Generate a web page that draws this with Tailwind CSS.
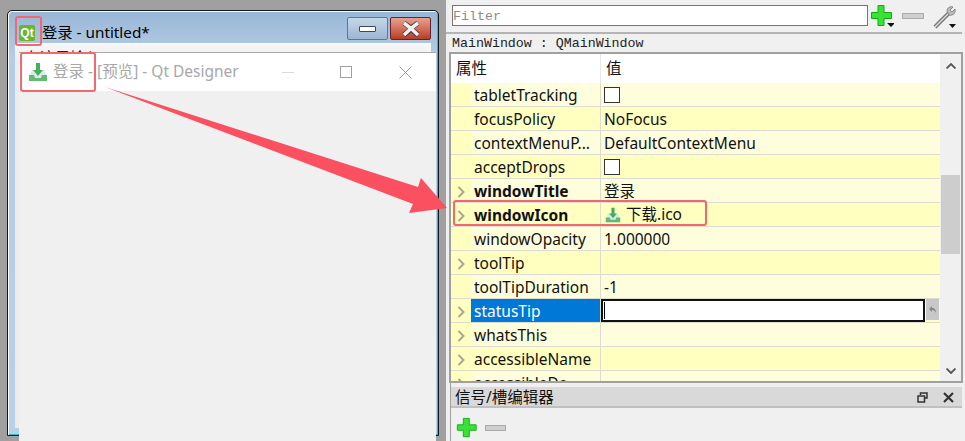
<!DOCTYPE html>
<html lang="zh-CN">
<head>
  <meta charset="UTF-8" />
  <title>Qt Designer</title>
  <script src="https://cdn.jsdelivr.net/npm/@tailwindcss/browser@4"></script>
</head>
<body class="w-[965px] h-[441px] overflow-hidden bg-[#a0a0a0] relative font-['Noto_Sans','Noto_Sans_CJK_SC',sans-serif] text-[15.5px] text-[#111]">

  <!-- Main window behind the preview -->
  <div class="absolute left-[7px] top-[10px] w-[432px] h-[426px] rounded-t-[5px] border border-[#101820] shadow-[inset_1px_1px_0_#fff,inset_-1px_-1px_0_#22b8d8] bg-gradient-to-b from-[#98b6d6] via-[#b4cce4] via-10% to-[#b8d0e8] flex flex-col">
    <div class="flex items-center h-[32px] shrink-0 pl-[11px] pt-[11px]">
      <div class="w-[16px] h-[16px] bg-[#6db52c] rounded-[2px] flex items-center justify-center text-white text-[12px] font-bold font-['Liberation_Sans',sans-serif]">Qt</div>
      <span class="ml-[7px] text-[15.3px] text-black">登录 - untitled*</span>
      <div class="ml-auto self-start flex gap-[2px] mr-[7px] mt-[-5px]">
        <div class="w-[41px] h-[23px] rounded-[2px] border border-[#5f7690] bg-gradient-to-b from-[#c5d8ea] to-[#9bb6d2] flex items-center justify-center">
          <div class="w-[17px] h-[6px] bg-white border border-[#445] rounded-[1px]"></div>
        </div>
        <div class="w-[41px] h-[23px] rounded-[2px] border border-[#6b2030] bg-gradient-to-b from-[#e8a090] to-[#b83c22] flex items-center justify-center">
          <svg class="w-[20px] h-[16px]" viewBox="0 0 20 16"><path d="M3 2l7 5 7-5M3 14l7-6 7 6" stroke="#334" stroke-width="5" fill="none"/><path d="M3 2l7 5.500 7-5.500M3 14l7-6.500 7 6.500" stroke="#f0f0f0" stroke-width="3.500" fill="none"/></svg>
        </div>
      </div>
    </div>
    <div class="ml-[7px] mr-[7px] h-[385px] bg-gradient-to-b from-[#f8f8f8] to-[#ececec] to-5% pl-[10px] leading-[28px] text-[15px] text-[#222]">在这里输入</div>
  </div>

  <!-- Preview window -->
  <div class="absolute left-[19px] top-[52px] w-[417px] h-[400px] bg-[#f0f0f0] border-t border-[#a8a8a8]">
    <div class="flex items-center h-[38px] bg-white pl-[9px] text-[#a8a8a8]">
      <svg class="w-[20px] h-[20px]" viewBox="0 0 20 20">
        <path d="M1 14l3-6h12l3 6v5H1z" fill="#dfe6f0"/>
        <path d="M1 13h5l1 3h6l1-3h5v6H1z" fill="#62bb70"/>
        <path d="M8 1h4v7h3l-5 6-5-6h3z" fill="#43b05c"/>
      </svg>
      <span class="ml-[5px] whitespace-nowrap">登录 - [预览] - Qt Designer</span>
      <div class="ml-auto flex items-center">
        <div class="w-[12px] h-px bg-[#d8d8d8]"></div>
        <div class="w-[12px] h-[12px] border border-[#a0a0a0] ml-[46px]"></div>
        <svg class="w-[13px] h-[13px] ml-[47px] mr-[24px]" viewBox="0 0 13 13"><path d="M.5.5l12 12M12.500.5l-12 12" stroke="#999" fill="none"/></svg>
      </div>
    </div>
  </div>

  <!-- Property editor panel -->
  <div class="absolute left-[446px] top-0 w-[519px] h-[441px] bg-[#f0f0f0] flex flex-col">
    <div class="flex items-start h-[34px] shrink-0 pl-[6px] pt-[4px] border-b-2 border-[#b4b4b4] w-[516px]">
      <div class="w-[416px] h-[21px] mt-[1px] bg-white border border-[#767676] font-['Liberation_Mono',monospace] text-[13.3px] leading-[21px] text-[#8c8c8c]">Filter</div>
      <svg class="w-[24px] h-[24px] ml-[2px]" viewBox="0 0 24 24">
        <path d="M8 1.500h6v7h7.500v6H14v7H8v-7H1.500v-6H8z" fill="#3ce03c" stroke="#08b008"/>
        <path d="M17 19h8l-4 4z" fill="#111"/>
      </svg>
      <div class="w-[22px] h-[6px] ml-[8px] mt-[9px] bg-[#cfcfcf] border border-[#aaa]"></div>
      <svg class="w-[26px] h-[26px] ml-[8px]" viewBox="0 0 26 26">
        <path d="M3 23L17 9" stroke="#777" stroke-width="4"/>
        <path d="M3 23L17 9" stroke="#ddd" stroke-width="1.500"/>
        <path d="M15 7c0-3 3-5 6-4l-3 3 2 2 3-3c1 4-2 7-6 6z" fill="#bbb" stroke="#888"/>
        <path d="M19 22h7l-3.500 4z" fill="#111" transform="translate(-2,-2)"/>
      </svg>
    </div>
    <div class="h-[18px] shrink-0 pl-[6px] w-[516px] font-['Liberation_Mono',monospace] text-[13.3px] leading-[20px] text-[#222]">MainWindow : QMainWindow</div>

    <!-- Property tree -->
    <div class="ml-[3px] w-[514px] h-[331px] shrink-0 border-2 border-[#a0a0a0] flex overflow-hidden bg-white">
      <div class="w-[489px] shrink-0 flex flex-col">
        <div class="grid grid-cols-[150px_1fr] h-[29px] shrink-0 items-center">
          <span class="pl-[5px] border-r border-[#e8e8e8] leading-[29px]">属性</span>
          <span class="pl-[5px]">值</span>
        </div>
        <div class="grid grid-cols-[20px_130px_1fr] grid-rows-[23px] h-[24px] shrink-0 bg-[#fefedc] border-b border-[#dcdcd0] leading-[25px]">
          <span class="bg-[#ffffbf]"></span><span class="pl-[3px] border-r border-[#dcdcd0]">tabletTracking</span>
          <span class="pl-[3px] pt-[4px]"><span class="block w-[16px] h-[16px] bg-white border border-[#333]"></span></span>
        </div>
        <div class="grid grid-cols-[20px_130px_1fr] grid-rows-[23px] h-[24px] shrink-0 bg-[#ffffbf] border-b border-[#dcdcd0] leading-[25px]">
          <span></span><span class="pl-[3px] border-r border-[#dcdcd0]">focusPolicy</span><span class="pl-[3px]">NoFocus</span>
        </div>
        <div class="grid grid-cols-[20px_130px_1fr] grid-rows-[23px] h-[24px] shrink-0 bg-[#fefedc] border-b border-[#dcdcd0] leading-[25px]">
          <span class="bg-[#ffffbf]"></span><span class="pl-[3px] border-r border-[#dcdcd0]">contextMenuP...</span><span class="pl-[3px]">DefaultContextMenu</span>
        </div>
        <div class="grid grid-cols-[20px_130px_1fr] grid-rows-[23px] h-[24px] shrink-0 bg-[#ffffbf] border-b border-[#dcdcd0] leading-[25px]">
          <span></span><span class="pl-[3px] border-r border-[#dcdcd0]">acceptDrops</span>
          <span class="pl-[3px] pt-[4px]"><span class="block w-[16px] h-[16px] bg-white border border-[#333]"></span></span>
        </div>
        <div class="grid grid-cols-[20px_130px_1fr] grid-rows-[23px] h-[24px] shrink-0 bg-[#fefedc] border-b border-[#dcdcd0] leading-[25px]">
          <span class="bg-[#ffffbf] pt-[2px] flex items-center justify-center"><svg class="w-[8px] h-[12px]" viewBox="0 0 8 12"><path d="M1.500 1l5 5-5 5" stroke="#a8a890" stroke-width="2" fill="none"/></svg></span>
          <span class="pl-[3px] border-r border-[#dcdcd0] font-bold">windowTitle</span><span class="pl-[3px]">登录</span>
        </div>
        <div class="grid grid-cols-[20px_130px_1fr] grid-rows-[23px] h-[24px] shrink-0 bg-[#ffffbf] border-b border-[#dcdcd0] leading-[25px]">
          <span class="pt-[2px] flex items-center justify-center"><svg class="w-[8px] h-[12px]" viewBox="0 0 8 12"><path d="M1.500 1l5 5-5 5" stroke="#a8a890" stroke-width="2" fill="none"/></svg></span>
          <span class="pl-[3px] border-r border-[#dcdcd0] font-bold">windowIcon</span>
          <span class="pl-[4px] flex items-center">
            <svg class="w-[16px] h-[16px]" viewBox="0 0 20 20">
              <path d="M1 14l3-6h12l3 6v5H1z" fill="#dfe6f0"/>
              <path d="M1 13h5l1 3h6l1-3h5v6H1z" fill="#62bb70"/>
              <path d="M8 1h4v7h3l-5 6-5-6h3z" fill="#43b05c"/>
            </svg>
            <span class="ml-[5px]">下载.ico</span>
          </span>
        </div>
        <div class="grid grid-cols-[20px_130px_1fr] grid-rows-[23px] h-[24px] shrink-0 bg-[#fefedc] border-b border-[#dcdcd0] leading-[25px]">
          <span class="bg-[#ffffbf]"></span><span class="pl-[3px] border-r border-[#dcdcd0]">windowOpacity</span><span class="pl-[3px]">1.000000</span>
        </div>
        <div class="grid grid-cols-[20px_130px_1fr] grid-rows-[23px] h-[24px] shrink-0 bg-[#ffffbf] border-b border-[#dcdcd0] leading-[25px]">
          <span class="pt-[2px] flex items-center justify-center"><svg class="w-[8px] h-[12px]" viewBox="0 0 8 12"><path d="M1.500 1l5 5-5 5" stroke="#a8a890" stroke-width="2" fill="none"/></svg></span>
          <span class="pl-[3px] border-r border-[#dcdcd0]">toolTip</span><span></span>
        </div>
        <div class="grid grid-cols-[20px_130px_1fr] grid-rows-[23px] h-[24px] shrink-0 bg-[#fefedc] border-b border-[#dcdcd0] leading-[25px]">
          <span class="bg-[#ffffbf]"></span><span class="pl-[3px] border-r border-[#dcdcd0]">toolTipDuration</span><span class="pl-[3px]">-1</span>
        </div>
        <div class="grid grid-cols-[20px_130px_1fr] grid-rows-[23px] h-[24px] shrink-0 bg-[#ffffbf] border-b border-[#dcdcd0] leading-[25px]">
          <span class="pt-[2px] flex items-center justify-center"><svg class="w-[8px] h-[12px]" viewBox="0 0 8 12"><path d="M1.500 1l5 5-5 5" stroke="#a8a890" stroke-width="2" fill="none"/></svg></span>
          <span class="pl-[3px] bg-[#0078d7] text-white border-r border-[#dcdcd0]">statusTip</span>
          <span class="flex">
            <span class="w-[324px] h-[23px] bg-white border-2 border-[#111] flex items-center pl-[1px]"><span class="w-px h-[17px] bg-black"></span></span>
            <span class="w-[13px] h-[21px] ml-[1px] bg-[#c8c8c8] flex items-center justify-center"><svg class="w-[9px] h-[9px]" viewBox="0 0 9 9"><path d="M4 1L1 4l3 3V5c2 0 3 1 4 3 0-3-1-5-4-5z" fill="#888"/></svg></span>
          </span>
        </div>
        <div class="grid grid-cols-[20px_130px_1fr] grid-rows-[23px] h-[24px] shrink-0 bg-[#fefedc] border-b border-[#dcdcd0] leading-[25px]">
          <span class="bg-[#ffffbf] pt-[2px] flex items-center justify-center"><svg class="w-[8px] h-[12px]" viewBox="0 0 8 12"><path d="M1.500 1l5 5-5 5" stroke="#a8a890" stroke-width="2" fill="none"/></svg></span>
          <span class="pl-[3px] border-r border-[#dcdcd0]">whatsThis</span><span></span>
        </div>
        <div class="grid grid-cols-[20px_130px_1fr] grid-rows-[23px] h-[24px] shrink-0 bg-[#ffffbf] border-b border-[#dcdcd0] leading-[25px]">
          <span class="pt-[2px] flex items-center justify-center"><svg class="w-[8px] h-[12px]" viewBox="0 0 8 12"><path d="M1.500 1l5 5-5 5" stroke="#a8a890" stroke-width="2" fill="none"/></svg></span>
          <span class="pl-[3px] border-r border-[#dcdcd0]">accessibleName</span><span></span>
        </div>
        <div class="grid grid-cols-[20px_130px_1fr] grid-rows-[23px] h-[24px] shrink-0 bg-[#fefedc] leading-[25px]">
          <span class="bg-[#ffffbf] pt-[2px] flex items-center justify-center"><svg class="w-[8px] h-[12px]" viewBox="0 0 8 12"><path d="M1.500 1l5 5-5 5" stroke="#a8a890" stroke-width="2" fill="none"/></svg></span>
          <span class="pl-[3px] border-r border-[#dcdcd0]">accessibleDe...</span><span></span>
        </div>
      </div>
      <!-- Scrollbar -->
      <div class="flex-1 bg-[#f0f0f0] flex flex-col items-center relative">
        <svg class="w-[10px] h-[6px] mt-[9px]" viewBox="0 0 10 6"><path d="M.5 5.500L5 1l4.500 4.500" stroke="#555" stroke-width="1.800" fill="none"/></svg>
        <div class="w-[19px] h-[79px] bg-[#cdcdcd] mt-[106px]"></div>
        <svg class="w-[10px] h-[6px] mt-auto mb-[7px]" viewBox="0 0 10 6"><path d="M.5.5L5 5 9.500.5" stroke="#555" stroke-width="1.800" fill="none"/></svg>
      </div>
    </div>

    <!-- Signal/slot editor dock -->
    <div class="flex-1 ml-[4px] w-[512px] border-l border-[#a0a0a0]">
      <div class="mt-[4px] h-[21px] pt-[2px] bg-[#d9d9d9] border-b-2 border-[#c0c0c0] flex items-center pl-[4px] leading-none">
        <span>信号/槽编辑器</span>
        <svg class="w-[11px] h-[11px] ml-auto" viewBox="0 0 11 11"><path d="M3.500 3V1h6.500v5H8M1 4h6.500v6H1z" stroke="#333" stroke-width="1.500" fill="none"/></svg>
        <svg class="w-[11px] h-[11px] ml-[15px] mr-[8px]" viewBox="0 0 11 11"><path d="M1 1l9 9M10 1l-9 9" stroke="#333" stroke-width="2.200" fill="none"/></svg>
      </div>
      <div class="flex items-center pl-[5px] pt-[9px]">
        <svg class="w-[22px] h-[22px]" viewBox="0 0 24 24"><path d="M8 1.500h6.500v7H22v6h-7.500v7H8v-7H1.500v-6H8z" fill="#3ce03c" stroke="#08b008"/></svg>
        <div class="w-[21px] h-[6px] ml-[7px] bg-[#cfcfcf] border border-[#aaa]"></div>
      </div>
    </div>
  </div>

  <!-- Annotations laid over the screenshot -->
  <div class="absolute left-[15px] top-[16px] w-[27px] h-[30px] rounded-[3px] border-2 border-[#f4686c]"></div>
  <div class="absolute left-[20px] top-[52px] w-[76px] h-[40px] rounded-[3px] border-2 border-[#f4686c]"></div>
  <div class="absolute left-[453px] top-[200px] w-[254px] h-[26px] rounded-[3px] border-2 border-[#f4686c]"></div>
  <svg class="absolute left-0 top-0 w-[965px] h-[441px] pointer-events-none" viewBox="0 0 965 441">
    <path d="M105 87L418 187L421 178L447 208L409 213L413 204Z" fill="#fb5060"/>
  </svg>
</body>
</html>
